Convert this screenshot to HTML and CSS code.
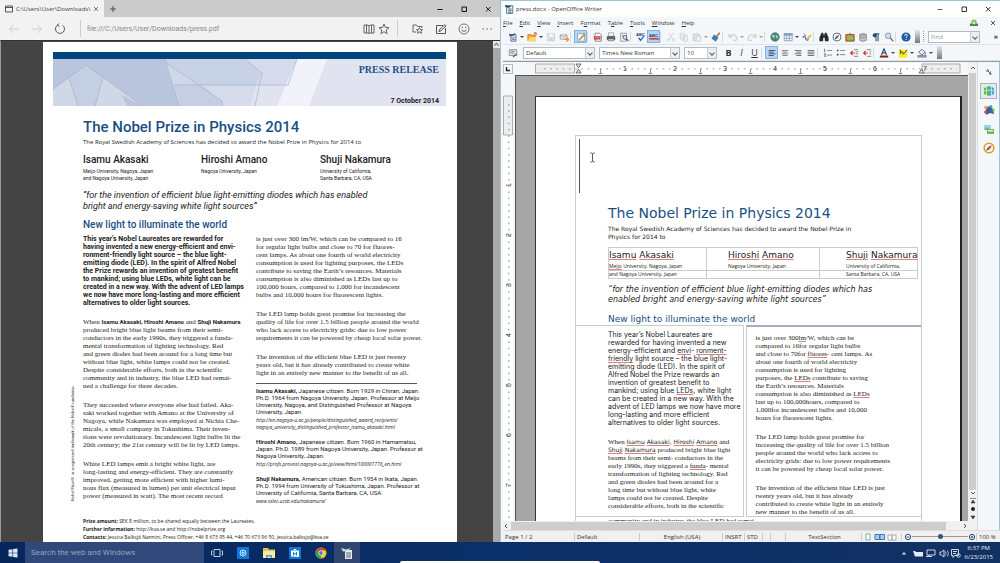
FILE: index.html
```html
<!DOCTYPE html>
<html lang="en">
<head>
<meta charset="utf-8">
<title>Desktop</title>
<link rel="stylesheet" href="styles.css">
</head>
<body>
<div class="desktop">

<section class="edge">
  <header class="tabstrip">
    <div class="tab">
      <svg class="i8" viewBox="0 0 8 8"><path d="M.5 1h7v6h-7zM.5 2.5h7" fill="none" stroke="#555"/></svg>
      <span class="tab-title">C:\Users\User\Downloads\</span>
      <button aria-label="Close tab"><svg class="i6" viewBox="0 0 6 6"><path d="M1 1l4 4M5 1l-4 4" stroke="#555" stroke-width=".8"/></svg></button>
    </div>
    <button class="newtab" aria-label="New tab"><svg class="i8" viewBox="0 0 8 8"><path d="M4 1v6M1 4h6" stroke="#444" stroke-width=".9"/></svg></button>
    <div class="winbtns">
      <button aria-label="Minimize"><svg class="i8" viewBox="0 0 8 8"><path d="M1.500 4.500h5" stroke="#111"/></svg></button>
      <button aria-label="Maximize"><svg class="i8" viewBox="0 0 8 8"><path d="M2 2h4.500v4.500H2z" fill="none" stroke="#111"/></svg></button>
      <button aria-label="Close"><svg class="i8" viewBox="0 0 8 8"><path d="M2 2l4.500 4.500M6.500 2L2 6.500" stroke="#111"/></svg></button>
    </div>
  </header>
  <div class="addressbar">
    <button aria-label="Back"><svg class="i12" viewBox="0 0 12 12"><path d="M11 6H1.500M5.500 2L1.500 6l4 4" fill="none" stroke="#ccc"/></svg></button>
    <button aria-label="Forward"><svg class="i12" viewBox="0 0 12 12"><path d="M1 6h9.500M6.500 2l4 4-4 4" fill="none" stroke="#ccc"/></svg></button>
    <button aria-label="Refresh"><svg class="i12" viewBox="0 0 12 12"><path d="M4 1.900A4.500 4.500 0 1 0 8.500 2.200M4.800.6L3.600 2.200l1.700 1.400" fill="none" stroke="#555"/></svg></button>
    <input class="url" aria-label="Address" value="file:///C:/Users/User/Downloads/press.pdf">
    <button aria-label="Reading view"><svg class="i12" viewBox="0 0 12 12"><path d="M1 2h4l1 1 1-1h4v8H7l-1 .6L5 10H1zM6 3v7M3.500 2v8M8.500 2v8" fill="none" stroke="#555" stroke-width=".9"/></svg></button>
    <button class="star" aria-label="Favorite"><svg class="i12" viewBox="0 0 12 12"><path d="M6 1l1.400 3.400 3.600.3-2.800 2.300.9 3.600L6 8.700l-3.100 1.900.9-3.600L1 4.700l3.600-.3z" fill="none" stroke="#555" stroke-width=".9"/></svg></button>
    <button aria-label="Hub"><svg class="i12" viewBox="0 0 12 12"><path d="M4 9H1V2h3.500l1 1.500H10V5" fill="none" stroke="#666"/><path d="M7.500 4.500l.9 2 2.200.2-1.700 1.400.6 2.200-2-1.200-1.900 1.200.5-2.200-1.700-1.400 2.200-.2z" fill="none" stroke="#555" stroke-width=".9"/></svg></button>
    <button aria-label="Web note"><svg class="i12" viewBox="0 0 12 12"><path d="M10.500 5v5.500h-9v-8H8M4 8.500l.6-2L10 1.600l1.200 1.200-5.300 5.100z" fill="none" stroke="#555"/></svg></button>
    <button aria-label="Feedback"><svg class="i12" viewBox="0 0 12 12"><circle cx="6" cy="6" r="5" fill="none" stroke="#666" stroke-width=".9"/><path d="M3.500 7.200q2.500 2.600 5 0" fill="none" stroke="#666"/><circle cx="4.300" cy="4.600" r=".7" fill="#555"/><circle cx="7.700" cy="4.600" r=".7" fill="#555"/></svg></button>
    <button aria-label="More"><svg class="i12" viewBox="0 0 12 12"><path d="M1.500 6h1.500M5.500 6H7M9.500 6H11" stroke="#666"/></svg></button>
  </div>
  <div class="viewer">
    <article class="pdf">
      <div class="banner">
        <svg class="banner-art" viewBox="0 0 393 47" preserveAspectRatio="none">
          <path fill="#e1e4f0" d="M0 0h393v47H0z"/>
          <path fill="#b9c4dd" d="M0 0h112l14 47H0z"/>
          <path fill="#c3cde2" d="M0 30L33 6l17 12-8 29H0z"/>
          <path fill="#d0d8e8" d="M0 30l16-11 9 28H0zM50 18l-8 29h32l-5-11 21 11zM112 3l57 39v5h-43z"/>
          <path fill="#c5cfe3" d="M16 19L33 6l17 12-8 29H25z"/>
          <path fill="#c8d2e6" d="M112 0h80l17 14-6 12h-82l48 16-57-39z"/>
          <path fill="#d6dbeb" d="M192 0h52l-10 26h-31l6-12zM121 26h82l-6 21h-28v-5z"/>
          <path fill="#c5cfe3" d="M121 26h27l21 16v5h-43z"/>
          <path fill="#f1f2fa" d="M244 0h30l-18 47h-32z"/>
          <path fill="none" stroke="#a3b1d0" stroke-width=".7" d="M0 30L33 6l57 41M16 19l9 28M50 18l-8 29M112 0l14 47M112 3l57 39v5M121 26h114L244 0M192 0l17 14-7 33"/>
        </svg>
        <div class="banner-text"><strong>PRESS RELEASE</strong><time>7 October 2014</time></div>
      </div>
      <div class="pdf-inner">
        <h1>The Nobel Prize in Physics 2014</h1>
        <p class="sub">The Royal Swedish Academy of Sciences has decided to award the Nobel Prize in Physics for 2014 to</p>
        <div class="laureates">
          <div><h3>Isamu Akasaki</h3><p>Meijo University, Nagoya, Japan<br>and Nagoya University, Japan</p></div>
          <div><h3>Hiroshi Amano</h3><p>Nagoya University, Japan</p></div>
          <div><h3>Shuji Nakamura</h3><p>University of California,<br>Santa Barbara, CA, USA</p></div>
        </div>
        <p class="quote">“for the invention of efficient blue light-emitting diodes which has enabled<br>bright and energy-saving white light sources”</p>
        <h2>New light to illuminate the world</h2>
      </div>
      <div class="pdf-cols">
        <p class="trademark">Nobel Prize® is a registered trademark of the Nobel Foundation.</p>
        <div class="serif">
          <p class="lead">This year’s Nobel Laureates are rewarded for<br>having invented a new energy-efficient and envi-<br>ronment-friendly light source – the blue light-<br>emitting diode (LED). In the spirit of Alfred Nobel<br>the Prize rewards an invention of greatest benefit<br>to mankind; using blue LEDs, white light can be<br>created in a new way. With the advent of LED lamps<br>we now have more long-lasting and more efficient<br>alternatives to older light sources.</p>
          <p>When <b>Isamu Akasaki, Hiroshi Amano</b> and <b>Shuji Nakamura</b><br>produced bright blue light beams from their semi-<br>conductors in the early 1990s, they triggered a funda-<br>mental transformation of lighting technology. Red<br>and green diodes had been around for a long time but<br>without blue light, white lamps could not be created.<br>Despite considerable efforts, both in the scientific<br>community and in industry, the blue LED had remai-<br>ned a challenge for three decades.</p>
          <p>They succeeded where everyone else had failed. Aka-<br>saki worked together with Amano at the University of<br>Nagoya, while Nakamura was employed at Nichia Che-<br>micals, a small company in Tokushima. Their inven-<br>tions were revolutionary. Incandescent light bulbs lit the<br>20th century; the 21st century will be lit by LED lamps.</p>
          <p>White LED lamps emit a bright white light, are<br>long-lasting and energy-efficient. They are constantly<br>improved, getting more efficient with higher lumi-<br>nous flux (measured in lumen) per unit electrical input<br>power (measured in watt). The most recent record</p>
        </div>
        <div class="serif">
          <p>is just over 300 lm/W, which can be compared to 16<br>for regular light bulbs and close to 70 for fluores-<br>cent lamps. As about one fourth of world electricity<br>consumption is used for lighting purposes, the LEDs<br>contribute to saving the Earth’s resources. Materials<br>consumption is also diminished as LEDs last up to<br>100,000 hours, compared to 1,000 for incandescent<br>bulbs and 10,000 hours for fluorescent lights.</p>
          <p>The LED lamp holds great promise for increasing the<br>quality of life for over 1.5 billion people around the world<br>who lack access to electricity grids: due to low power<br>requirements it can be powered by cheap local solar power.</p>
          <p>The invention of the efficient blue LED is just twenty<br>years old, but it has already contributed to create white<br>light in an entirely new manner to the benefit of us all.</p>
          <div class="bios">
            <p><b>Isamu Akasaki,</b> Japanese citizen. Born 1929 in Chiran, Japan.<br>Ph.D. 1964 from Nagoya University, Japan. Professor at Meijo<br>University, Nagoya, and Distinguished Professor at Nagoya<br>University, Japan.</p>
            <p class="link">http://en.nagoya-u.ac.jp/people/distinguished_award_recipients/<br>nagoya_university_distinguished_professor_isamu_akasaki.html</p>
            <p><b>Hiroshi Amano,</b> Japanese citizen. Born 1960 in Hamamatsu,<br>Japan. Ph.D. 1989 from Nagoya University, Japan. Professor at<br>Nagoya University, Japan.</p>
            <p class="link">http://profs.provost.nagoya-u.ac.jp/view/html/100001778_en.html</p>
            <p><b>Shuji Nakamura,</b> American citizen. Born 1954 in Ikata, Japan.<br>Ph.D. 1994 from University of Tokushima, Japan. Professor at<br>University of California, Santa Barbara, CA, USA.</p>
            <p class="link">www.sslec.ucsb.edu/nakamura/</p>
          </div>
        </div>
      </div>
      <p class="contacts"><b>Prize amount:</b> SEK 8 million, to be shared equally between the Laureates.<br><b>Further information:</b> http://kva.se and http://nobelprize.org<br><b>Contacts:</b> Jessica Balksjö Nannini, Press Officer, +46 8 673 95 44, +46 70 673 96 50, jessica.balksjo@kva.se</p>
    </article>
    <div class="vscroll"><svg class="i6" viewBox="0 0 6 6"><path d="M1 4l2-2 2 2" fill="none" stroke="#777"/></svg></div>
  </div>
</section>

<section class="writer">
  <header class="wtitle">
    <svg class="i10" viewBox="0 0 12 12"><path fill="#e6eef5" stroke="#3b6f96" d="M3 2h7.500v9.500H3z"/><path d="M1 1l4 1.500L9 2 6 4.500 2 4z" fill="#245"/><path d="M5 6h4M5 8h4M5 10h4" stroke="#357"/></svg>
    <h1>press.docx - OpenOffice Writer</h1>
    <div class="winbtns">
      <button aria-label="Minimize"><svg class="i8" viewBox="0 0 8 8"><path d="M1.500 4.500h5" stroke="#666"/></svg></button>
      <button aria-label="Maximize"><svg class="i8" viewBox="0 0 8 8"><path d="M2 2h4.500v4.500H2z" fill="none" stroke="#333"/></svg></button>
      <button aria-label="Close"><svg class="i8" viewBox="0 0 8 8"><path d="M2 2l4.500 4.500M6.500 2L2 6.500" stroke="#333"/></svg></button>
    </div>
  </header>
  <nav class="menubar">
    <button><u>F</u>ile</button><button><u>E</u>dit</button><button><u>V</u>iew</button><button><u>I</u>nsert</button><button>F<u>o</u>rmat</button><button>T<u>a</u>ble</button><button><u>T</u>ools</button><button><u>W</u>indow</button><button><u>H</u>elp</button>
    <span class="menu-right">
      <button aria-label="Update"><svg class="i8" viewBox="0 0 8 8"><path d="M0 4.500h8V7H0z" fill="#4a7a58"/><circle cx="4" cy="3" r="2.600" fill="#6cc13a"/><path d="M4 1.500V5M2.500 3.500L4 5l1.500-1.500" stroke="#fff" fill="none" stroke-width=".8"/></svg></button>
      <button aria-label="Close document"><svg class="i6" viewBox="0 0 6 6"><path d="M1 1l4 4M5 1L1 5" stroke="#555"/></svg></button>
    </span>
  </nav>
  <div class="toolbar">
    <button aria-label="New"><svg viewBox="0 0 12 12"><path fill="#dde8ef" stroke="#557" d="M3.500 3h6v8h-6z"/><path d="M1 2l4 1 4-2-2 3.500-5 .5z" fill="#2d5f83"/><path d="M5 7h3M5 9h3" stroke="#468"/></svg></button><i class="dd"></i>
    <button aria-label="Open"><svg viewBox="0 0 12 12"><path fill="#f5a81c" stroke="#c5761a" stroke-width=".8" d="M1 3h4l1 1h4v6.500H1z"/><path fill="#ffd870" d="M3 6h8.500L10 11H1z"/><path d="M7 5l4-4M8 1h3v3" stroke="#d54a22" fill="none"/></svg></button><i class="dd"></i>
    <button aria-label="Save"><svg class="off" viewBox="0 0 12 12"><path fill="#ddd" stroke="#999" d="M2 2h8v8.500H2z"/><path fill="#fff" d="M4 2h4v3H4z"/><path fill="#aaa" d="M4 7h4v3H4z"/></svg></button>
    <button aria-label="Mail"><svg viewBox="0 0 12 12"><path fill="#f2f2f2" stroke="#999" d="M1.500 3.500h8v5h-8l0-5 4 3 4-3"/><path d="M6 9h4M9 6.500L11.500 9 9 11.500" stroke="#e08a1c" fill="none" stroke-width="1.400"/></svg></button><i class="sep"></i>
    <button class="on" aria-label="Edit file"><svg viewBox="0 0 12 12"><path fill="#fff" stroke="#7a9ab8" d="M2 2h8v9H2z"/><path d="M4 8.500L9.500 2l1.500 1.200L5.500 9 3.700 9.700z" fill="#f1b52e" stroke="#8a6a20" stroke-width=".6"/></svg></button><i class="sep"></i>
    <button aria-label="Export PDF"><svg viewBox="0 0 12 12"><path fill="#fff" stroke="#777" d="M2.500 1.500H8l2 2V11H2.500z"/><path fill="#cb2b36" d="M1 5h8v4H1z"/><path d="M2 7.500l2-1.500 2 1.500 2-1.500" stroke="#fff" fill="none" stroke-width=".8"/></svg></button>
    <button aria-label="Print"><svg viewBox="0 0 12 12"><path fill="#fff" stroke="#888" stroke-width=".8" d="M3 1h6v4H3z"/><path fill="#555f6a" d="M1 5h10v4.500H1z"/><path fill="#ccc" stroke="#444" stroke-width=".6" d="M2.500 8h7v2.500h-7z"/></svg></button>
    <button aria-label="Preview"><svg viewBox="0 0 12 12"><path fill="#fff" stroke="#888" d="M2 1.500h7V11H2z"/><path d="M3.500 4h3M3.500 6h2" stroke="#89a"/><circle cx="7" cy="6.500" r="2.300" fill="#d8ecfa" stroke="#446"/><path d="M8.800 8.300l2.400 2.400" stroke="#445" stroke-width="1.400"/></svg></button><i class="sep"></i>
    <button aria-label="Spelling"><svg viewBox="0 0 12 12"><text x="0" y="5" class="abc">ABC</text><path d="M3 7l2.500 3L10 4" stroke="#2a78bd" fill="none" stroke-width="1.800"/></svg></button>
    <button class="on" aria-label="Auto spellcheck"><svg viewBox="0 0 12 12"><text x="0" y="6" class="abc">ABC</text><path d="M0 8.500l1.500-1L3 9l1.500-1.500L6 9l1.500-1.500L9 9l1.500-1.500L12 9" stroke="#d0313b" fill="none" stroke-width="1.300"/></svg></button><i class="sep"></i>
    <button aria-label="Cut"><svg class="off" viewBox="0 0 12 12"><path d="M3 1l5 7M9 1L4 8" stroke="#aaa"/><circle cx="3" cy="9.500" r="1.500" fill="none" stroke="#aaa"/><circle cx="9" cy="9.500" r="1.500" fill="none" stroke="#aaa"/></svg></button>
    <button aria-label="Copy"><svg class="off" viewBox="0 0 12 12"><path fill="#e8e8e8" stroke="#aaa" d="M1.500 1.500h5v7h-5zM5 4h5v7H5z"/></svg></button>
    <button aria-label="Paste"><svg class="off" viewBox="0 0 12 12"><path fill="#ccc" stroke="#999" d="M1.500 2.500h7v8h-7z"/><path fill="#eee" stroke="#aaa" d="M5 5h5.500v6H5z"/></svg></button><i class="dd off"></i>
    <button aria-label="Format paintbrush"><svg viewBox="0 0 12 12"><path d="M7 5l3.500-4" stroke="#a0682a" stroke-width="1.800"/><path fill="#3d7fc4" stroke="#24507e" stroke-width=".7" d="M4 3.500l4.500 3.500-3 4L1 7.500z"/></svg></button><i class="sep"></i>
    <button aria-label="Undo"><svg class="off" viewBox="0 0 12 12"><path d="M2 5q5-4 8 1t-4 4M1.500 2v4h4" fill="none" stroke="#aaa" stroke-width="1.500"/></svg></button><i class="dd off"></i>
    <button aria-label="Redo"><svg class="off" viewBox="0 0 12 12"><path d="M10 5Q5 1 2 6t4 4M10.500 2v4h-4" fill="none" stroke="#aaa" stroke-width="1.500"/></svg></button><i class="dd off"></i><i class="sep"></i>
    <button aria-label="Hyperlink"><svg viewBox="0 0 12 12"><circle cx="6" cy="6" r="5" fill="#3f8f57" stroke="#567"/><path d="M2 4l3-1 1 2-2 3zM7 3l3 2-1 3-2-1z" fill="#9fc3e8"/></svg></button>
    <button aria-label="Table"><svg viewBox="0 0 12 12"><path fill="#fff" stroke="#8a9bb0" d="M1.500 2h9.500v8.500H1.500zM1.500 7.500h9.500M4.500 2v8.500M7.800 2v8.500"/><path fill="#7d9fca" d="M1 1.500h10.500v3H1z"/></svg></button><i class="dd"></i>
    <button aria-label="Draw"><svg viewBox="0 0 12 12"><path d="M1 7q2-4 3 0t4 2" stroke="#3a72c8" fill="none" stroke-width="1.500"/><path d="M5 8l5-5 1.500 1.500-5 5z" fill="#efb52c"/><path d="M2 2l3 3" stroke="#d4533c"/></svg></button><i class="sep"></i>
    <button aria-label="Find and replace"><svg viewBox="0 0 12 12"><path fill="#222a33" d="M3 1h2l.7 3h.6L7 1h2l2.500 6v4H7V7H5v4H.5V7z"/></svg></button>
    <button aria-label="Navigator"><svg viewBox="0 0 12 12"><circle cx="6" cy="6" r="4.800" fill="#eef5fb" stroke="#5a7896" stroke-width="1.200"/><path fill="#d4432e" d="M9 3L5 5l2 2z"/><path fill="#345" d="M3 9l2-4 2 2z"/></svg></button>
    <button aria-label="Gallery"><svg viewBox="0 0 12 12"><path fill="#c98b2f" stroke="#80521c" d="M1 3h10v8H1z"/><path fill="#7ec27f" d="M3 5h6v4H3z"/><path d="M4 3l2-2 2 2" stroke="#888" fill="none"/></svg></button>
    <button aria-label="Data sources"><svg viewBox="0 0 12 12"><path fill="#bfc4c9" stroke="#777" stroke-width=".8" d="M2 3q4-2.500 8 0v7q-4 2.500-8 0z"/><path d="M2 3q4 2 8 0M2 6q4 2 8 0" fill="none" stroke="#777" stroke-width=".7"/></svg></button>
    <button aria-label="Nonprinting characters"><svg viewBox="0 0 12 12"><path d="M10 2H5M6 2v9M8.500 2v9" stroke="#2b5078" stroke-width="1.300"/><circle cx="4.500" cy="4" r="2.500" fill="#2b5078"/></svg></button>
    <button aria-label="Zoom"><svg viewBox="0 0 12 12"><circle cx="5" cy="4.500" r="3.300" fill="#cfe5f7" stroke="#6e88a2"/><path d="M7.500 7l3.500 4" stroke="#a36a3a" stroke-width="1.700"/></svg></button><i class="sep"></i>
    <button aria-label="Help"><svg viewBox="0 0 12 12"><circle cx="6" cy="6" r="5.500" fill="#2258a8"/><path d="M4.300 4.500q.2-2 2-1.800 1.600.4 1.200 1.800Q6.200 5.600 6.100 7M6.100 8.200v1.300" stroke="#fff" fill="none" stroke-width="1.200"/></svg></button>
    <i class="bar-end"></i><i class="grip"></i>
    <span class="combo find"><input aria-label="Find" placeholder="Find"><i class="chev"></i></span>
    <span class="more">»</span>
  </div>
  <div class="toolbar">
    <button aria-label="Styles"><svg viewBox="0 0 12 12"><path fill="#e4e7ea" stroke="#888" d="M1.500 2h9v7h-9z"/><path d="M3 4h5M3 6h4" stroke="#777"/><path d="M6 11l4-4" stroke="#555" stroke-width="1.500"/></svg></button>
    <span class="combo c-style"><select aria-label="Style"><option>Default</option></select><i class="chev"></i></span>
    <span class="combo c-font"><select aria-label="Font"><option>Times New Roman</option></select><i class="chev"></i></span>
    <span class="combo c-size"><select aria-label="Size"><option>10</option></select><i class="chev"></i></span>
    <button class="fmt"><b>B</b></button><button class="fmt"><em>I</em></button><button class="fmt"><u>U</u></button><i class="sep"></i>
    <button class="on" aria-label="Align left"><svg viewBox="0 0 12 12"><path d="M2 3h8M2 5h6M2 7h8M2 9h6" stroke="#557" stroke-width="1.200"/></svg></button>
    <button aria-label="Center"><svg viewBox="0 0 12 12"><path d="M2 3h8M3 5h6M2 7h8M3 9h6" stroke="#888" stroke-width="1.200"/></svg></button>
    <button aria-label="Align right"><svg viewBox="0 0 12 12"><path d="M2 3h8M4 5h6M2 7h8M4 9h6" stroke="#777" stroke-width="1.200"/></svg></button>
    <button aria-label="Justify"><svg viewBox="0 0 12 12"><path d="M2 3h8M2 5h8M2 7h8M2 9h8" stroke="#777" stroke-width="1.200"/></svg></button><i class="sep"></i>
    <button aria-label="Numbering"><svg viewBox="0 0 12 12"><path d="M2 1v4M1 7h2l-1 3h2" stroke="#444" fill="none" stroke-width=".9"/><path d="M5 3h6M5 8.500h6" stroke="#777"/></svg></button>
    <button aria-label="Bullets"><svg viewBox="0 0 12 12"><path fill="#444" d="M1 2h2v2H1zM1 7h2v2H1z"/><path d="M5 3h6M5 8h6" stroke="#777"/></svg></button>
    <button aria-label="Decrease indent"><svg viewBox="0 0 12 12"><path d="M6 2h5M8 4.500h3M8 7h3M6 10h5" stroke="#777"/><path d="M7 6H2M4.500 3.500L2 6l2.500 2.500" stroke="#c9382e" fill="none" stroke-width="1.400"/></svg></button>
    <button aria-label="Increase indent"><svg viewBox="0 0 12 12"><path d="M6 2h5M9 4.500h2M9 7h2M6 10h5" stroke="#777"/><path d="M7 6H2M4.500 3.500L2 6l2.500 2.500" stroke="#c9382e" fill="none" stroke-width="1.400"/></svg></button><i class="sep"></i>
    <button aria-label="Font color"><svg viewBox="0 0 12 12"><path d="M3 8l3-7 3 7M4 6h4" fill="none" stroke="#223c66" stroke-width="1.300"/><path fill="#8c1f24" d="M1 9h10v2.500H1z"/></svg></button><i class="dd"></i>
    <button aria-label="Highlighting"><svg viewBox="0 0 12 12"><path fill="#ffe81a" d="M1 2h10v9.500H1z"/><path d="M3 7V2M3 5h3v3M7 7l4-5" fill="none" stroke="#554" stroke-width="1.200"/></svg></button><i class="dd"></i>
    <button aria-label="Background color"><svg viewBox="0 0 12 12"><path d="M2 5l4-3.500L9.500 5 6 8.500z" fill="#e9eef3" stroke="#557"/><path d="M10 5v3" stroke="#38c" stroke-width="1.300"/><path fill="#9aa4ac" stroke="#556" stroke-width=".6" d="M1 9h10v2H1z"/></svg></button><i class="dd"></i>
    <i class="bar-end"></i>
  </div>

  <div class="work">
    <div class="edit-area">
      <div class="hruler">
        <span class="tabbox"><svg class="i6" viewBox="0 0 6 6"><path d="M1.500 1v3.500H5" fill="none" stroke="#222" stroke-width="1.300"/></svg></span>
        <svg class="hr-svg" viewBox="0 0 426 12">
          <defs><pattern id="ht" width="6.250" height="12" patternUnits="userSpaceOnUse" x="40"><path d="M.5 5h1v1.500h-1z" fill="#888"/></pattern></defs>
          <path fill="#fff" d="M40 0h346v11H40z"/>
          <path fill="#eee" stroke="#999" stroke-width=".8" d="M.5 1h39v9H.5zM387 1h38v9h-38z"/>
          <path fill="url(#ht)" d="M4 0h418v11H4z"/>
          <path d="M65.500 6v5M63.500 10.500h4M115.500 6v5M113.500 10.500h4M165.500 6v5M163.500 10.500h4M215.500 6v5M213.500 10.500h4M265.500 6v5M263.500 10.500h4M315.500 6v5M313.500 10.500h4M365.500 6v5M363.500 10.500h4" stroke="#777" stroke-width=".8"/>
          <g class="rnum"><text x="90" y="8">1</text><text x="140" y="8">2</text><text x="190" y="8">3</text><text x="240" y="8">4</text><text x="290" y="8">5</text><text x="340" y="8">6</text><text x="390" y="8">7</text></g>
          <path d="M41 1h5L43.500 5zM41 10l2.500-4L46 10zM384 10l2.500-4 2.500 4z" fill="#ddd" stroke="#555" stroke-width=".8"/>
        </svg>
      </div>
      <div class="canvas-row">
        <svg class="vruler" viewBox="0 0 12 446">
          <defs><pattern id="vt" width="12" height="6.250" patternUnits="userSpaceOnUse" y="60"><path d="M5 .5h1.500v1H5z" fill="#888"/></pattern></defs>
          <path fill="#fff" d="M0 60h10v386H0z"/>
          <path fill="#eee" stroke="#999" stroke-width=".8" d="M.5 21h9v39h-9z"/>
          <path fill="url(#vt)" d="M0 24h10v422H0z"/>
          <g class="rnum"><text transform="translate(8 110) rotate(-90)">1</text><text transform="translate(8 160) rotate(-90)">2</text><text transform="translate(8 210) rotate(-90)">3</text><text transform="translate(8 260) rotate(-90)">4</text><text transform="translate(8 310) rotate(-90)">5</text><text transform="translate(8 360) rotate(-90)">6</text><text transform="translate(8 410) rotate(-90)">7</text></g>
        </svg>
        <div class="canvas">
          <article class="doc">
            <div class="frame">
              <span class="caret"></span>
              <svg class="ibeam" viewBox="0 0 6 10"><path d="M1 1h1.500l.5.500.5-.5H5M3 1.500v7M1 9h1.500L3 8.500l.5.500H5" fill="none" stroke="#444" stroke-width=".8"/></svg>
              <div class="doc-head">
                <h1>The Nobel Prize in Physics 2014</h1>
                <p class="dsub">The Royal Swedish Academy of Sciences has decided to award the Nobel Prize in<br>Physics for 2014 to</p>
                <table>
                  <tr><td><h3><s>Isamu</s> <s>Akasaki</s></h3><p><s>Meijo</s> University, Nagoya, Japan</p></td><td><h3><s>Hiroshi</s> <s>Amano</s></h3><p>Nagoya University, Japan</p></td><td><h3><s>Shuji</s> <s>Nakamura</s></h3><p>University of California,</p></td></tr>
                  <tr><td>and Nagoya University, Japan</td><td></td><td>Santa Barbara, CA, USA</td></tr>
                </table>
                <p class="dquote">“for the invention of efficient blue light-emitting diodes which has<br>enabled bright and energy-saving white light sources”</p>
                <h2>New light to illuminate the world</h2>
              </div>
              <div class="doc-cols">
                <div class="dcol-l">
                  <p class="dlead">This year’s Nobel Laureates are<br>rewarded for having invented a new<br>energy-efficient and <s>envi</s>- <s>ronment-</s><br><s>friendly</s> light source – the blue light-<br>emitting diode (LED). In the spirit of<br>Alfred Nobel the Prize rewards an<br>invention of greatest benefit to<br>mankind; using blue <s>LEDs</s>, white light<br>can be created in a new way. With the<br>advent of LED lamps we now have more<br>long-lasting and more efficient<br>alternatives to older light sources.</p>
                  <p>When <span class="sans"><s>Isamu</s> <s>Akasaki</s>, <s>Hiroshi</s> <s>Amano</s></span> and<br><span class="sans"><s>Shuji</s> <s>Nakamura</s></span> produced bright blue light<br>beams from their semi- conductors in the<br>early 1990s, they triggered a <s>funda</s>- mental<br>transformation of lighting technology. Red<br>and green diodes had been around for a<br>long time but without blue light, white<br>lamps could not be created. Despite<br>considerable efforts, both in the scientific</p>
                </div>
                <div class="dcol-r">
                  <p>is just over 300<s>lm</s>/W, which can be<br>compared to 16for regular light bulbs<br>and close to 70for <s>fluores</s>- cent lamps. As<br>about one fourth of world electricity<br>consumption is used for lighting<br>purposes, the <s>LEDs</s> contribute to saving<br>the Earth’s resources. Materials<br>consumption is also diminished as <s>LEDs</s><br>last up to 100,000hours, compared to<br>1,000for incandescent bulbs and 10,000<br>hours for fluorescent lights.</p>
                  <p>The LED lamp holds great promise for<br>increasing the quality of life for over 1.5 billion<br>people around the world who lack access to<br>electricity grids: due to low power requirements<br>it can be powered by cheap local solar power.</p>
                  <p>The invention of the efficient blue LED is just<br>twenty years old, but it has already<br>contributed to create white light in an entirely<br>new manner to the benefit of us all.</p>
                </div>
              </div>
              <p class="doc-tail">community and in industry, the blue LED had remai-</p>
            </div>
          </article>
        </div>
      </div>
      <div class="hscroll"><svg class="i6" viewBox="0 0 6 6"><path d="M4 1L2 3l2 2" fill="none" stroke="#555"/></svg><div class="hthumb"></div><svg class="i6 hright" viewBox="0 0 6 6"><path d="M2 1l2 2-2 2" fill="none" stroke="#555"/></svg></div>
    </div>
    <div class="wscroll">
      <svg class="i6" viewBox="0 0 6 6"><path d="M1 4l2-2 2 2" fill="none" stroke="#555"/></svg><div class="wthumb"></div>
      <svg class="wnav" viewBox="0 0 8 32"><path d="M2 2l2 2 2-2" fill="none" stroke="#555"/><path d="M1 8.500h6M2 13l2-3 2 3zM2 26l2 3 2-3z" fill="#333" stroke="#444" stroke-width=".6"/><circle cx="4" cy="19" r="2" fill="#222"/></svg>
    </div>
    <aside class="sidebar">
      <button aria-label="Sidebar settings"><svg class="i8" viewBox="0 0 12 12"><path d="M3 3l5 5M3 6V3h3M8 5v5M6 9h4" stroke="#555" fill="none" stroke-width="1.300"/></svg></button>
      <button class="sel" aria-label="Properties"><svg class="i12" viewBox="0 0 12 12"><path fill="#58b947" d="M1 3l5-2v10L1 9z"/><path fill="#3fa8dc" d="M6 1l5 2v6l-5 2z"/><path d="M1 6l5-1 5 1M3.500 2v8M8.500 2v8" stroke="#d8f0c8" fill="none" stroke-width=".8"/></svg></button>
      <button aria-label="Styles"><svg class="i12" viewBox="0 0 12 12"><path fill="#3e5c96" d="M3 4l3-2 4 3 1 5-4-1-4 2z"/><circle cx="3" cy="3.500" r="1.800" fill="#e8a13a"/><circle cx="8" cy="2.500" r="1.500" fill="#3aa3d8"/><circle cx="10" cy="6" r="1.500" fill="#58b947"/><circle cx="2.500" cy="8" r="1.500" fill="#d0437c"/></svg></button>
      <button aria-label="Gallery"><svg class="i12" viewBox="0 0 12 12"><path fill="#9bd4ea" d="M1 2h7v5H1z"/><path fill="#77b657" d="M1 7l3-3 4 3zM4 6h7v5H4z"/><path fill="#d5ecf8" d="M5 7h5v1.500H5z"/></svg></button>
      <button aria-label="Navigator"><svg class="i12" viewBox="0 0 12 12"><circle cx="6" cy="6" r="4.800" fill="#fdf6e6" stroke="#e59a2c" stroke-width="1.600"/><path fill="#d6402c" d="M9 3L5 5l2 2z"/><path fill="#3b5f98" d="M3 9l2-4 2 2z"/></svg></button>
    </aside>
  </div>
  <footer class="status">
    <span class="s1">Page 1 / 2</span><span class="s2">Default</span><span class="s3">English (USA)</span><span class="s4">INSRT</span><span class="s5">STD</span><span class="s6"></span><span class="s7"></span><span class="s8">TextSection</span>
    <span class="s9"><svg viewBox="0 0 34 8"><path d="M2 1h4v6H2z" fill="#fff" stroke="#8aa"/><path d="M11 1.500h4.500v5H11zM16 1.500h4.500v5H16z" fill="#a9cdf0" stroke="#3c78b8"/><path d="M24 2h4v5h-4zM28 2h4v5h-4z" fill="#fff" stroke="#999" stroke-width=".8"/></svg></span>
    <span class="s10"><svg class="i8" viewBox="0 0 8 8"><circle cx="4" cy="4" r="2.700" fill="#fff" stroke="#357"/><path d="M2.500 4h3" stroke="#357"/></svg><input type="range" aria-label="Zoom" min="0" max="100" value="50"><svg class="i8" viewBox="0 0 8 8"><circle cx="4" cy="4" r="2.700" fill="#fff" stroke="#357"/><path d="M2.500 4h3M4 2.500v3" stroke="#357"/></svg></span>
    <span class="s11">100 %</span>
  </footer>
</section>
</div>

<footer class="taskbar">
  <button class="start" aria-label="Start"><svg class="i10" viewBox="0 0 10 10"><path fill="#dfe6f2" d="M.5 1.800l4-.6v3.500h-4zM5.100 1.100L9.500.5v4.200H5.100zM.5 5.300h4v3.500l-4-.6zM5.100 5.300h4.400v4.200l-4.400-.6z"/></svg></button>
  <input class="search" aria-label="Search" placeholder="Search the web and Windows">
  <div class="apps">
    <button aria-label="Task view"><svg class="i12" viewBox="0 0 12 12"><path d="M3 2.500h6v7H3zM1.500 4H.5v4h1M10.500 4h1v4h-1" fill="none" stroke="#d8e0ec" stroke-width=".9"/></svg></button>
    <button aria-label="Teams"><svg class="i14" viewBox="0 0 14 14"><path fill="#0f78d6" d="M1 1h12v12H1z"/><circle cx="7" cy="7" r="3" fill="none" stroke="#cfe6fb"/><path d="M7 5v4M5 7h4" stroke="#cfe6fb"/></svg></button>
    <button aria-label="File Explorer"><svg class="i14" viewBox="0 0 14 14"><path fill="#e8bf4b" d="M1 2h5l1 1.500h6V12H1z"/><path fill="#fbe8a0" d="M1 5h12v7H1z"/><path fill="#4aa3e0" d="M4 9h6v3H8.500v-1.500h-3V12H4z"/></svg></button>
    <button aria-label="Store"><svg class="i14" viewBox="0 0 14 14"><path fill="#0f78d6" d="M1 1h12v12H1z"/><path fill="#fff" d="M3 4.500h8V11l-8-.5z"/><path d="M5.500 4.500q1.500-3 3 0" fill="none" stroke="#fff"/><path d="M5.500 6v3.500M8.500 6v3.500M5 7.800h4" stroke="#0f78d6"/></svg></button>
    <button aria-label="Chrome"><svg class="i14" viewBox="0 0 14 14"><circle cx="7" cy="7" r="5.500" fill="#f3c42c"/><path fill="#d94234" d="M7 7L2.200 4.200A5.500 5.500 0 0 1 11.900 4.500H7z"/><path fill="#3a9e4a" d="M7 7L2.200 4.200A5.500 5.500 0 0 0 6.800 12.500z"/><circle cx="7" cy="7" r="2.500" fill="#fff"/><circle cx="7" cy="7" r="1.900" fill="#3f7fe0"/></svg></button>
    <button class="active" aria-label="OpenOffice"><svg class="i14" viewBox="0 0 14 14"><path fill="#e8edf2" d="M5 4h7v9H5z"/><path d="M1 2l5 1.500L11 2 7.500 5 3 5.500z" fill="#cfd9e4"/><path d="M6 7h5M6 9h5M6 11h5" stroke="#456" stroke-width=".9"/></svg></button>
  </div>
  <div class="sheet"></div>
  <div class="tray">
    <svg viewBox="0 0 66 12"><path fill="#e4eaf4" d="M3 7.500l2-2.500 2 2.500zM14 4h2l1 1h7v4.500h-8z"/><path d="M28 3h8v5h-8zM27 9.500h6M30 8v1.500M41 5h1.500L45 3v7l-2.500-2H41z" fill="none" stroke="#e4eaf4" stroke-width=".9"/><path d="M46.500 4.500q1.200 2 0 4M48.500 3.500q1.800 3 0 6" fill="none" stroke="#cbd5e6" stroke-width=".8"/><path d="M52.500 2.500h7v6h-4l-1.500 2v-2h-1.500zM54 4.500h4M54 6.500h3" fill="none" stroke="#e4eaf4" stroke-width=".9"/><circle cx="59.500" cy="8.500" r="1.800" fill="none" stroke="#e4eaf4" stroke-width=".8"/></svg>
    <time>6:37 PM<br>6/23/2015</time>
  </div>
</footer>
</body>
</html>
```
FILE: styles.css
```css
* { box-sizing: border-box; }
body { margin: 0; height: 100vh; display: flex; flex-direction: column; overflow: hidden; font: 6px/10px "Open Sans", sans-serif; color: #333; }
h1, h2, h3, p { margin: 0; font-weight: 400; font-size: inherit; }
button, input, select { font: inherit; color: inherit; border: 0; background: none; padding: 0; margin: 0; outline: 0; }
button { display: flex; align-items: center; justify-content: center; flex: none; }
svg { display: block; flex: none; }
time { display: block; }
.i6 { width: 6px; height: 6px; }
.i8 { width: 8px; height: 8px; }
.i10 { width: 10px; height: 10px; }
.i12 { width: 12px; height: 12px; }
.i14 { width: 14px; height: 14px; }

.desktop { flex: 1; min-height: 0; display: grid; grid-template-columns: 1fr 1fr; }

/* Browser window */
.edge { display: flex; flex-direction: column; min-width: 0; min-height: 0; background: #f2f2f2; }
.tabstrip { display: flex; height: 17px; background: #cbcbcb; align-items: stretch; }
.tab { width: 104px; background: #f2f2f2; display: flex; align-items: center; gap: 3px; padding: 0 6px 0 5px; color: #444; }
.tab-title { flex: 1; white-space: nowrap; }
.newtab { width: 18px; }
.winbtns { margin-left: auto; display: flex; align-items: center; gap: 16px; padding-right: 8px; }
.addressbar { display: flex; align-items: center; height: 23px; padding: 0 7px 0 8px; gap: 11px; }
.url { flex: 1; min-width: 0; height: 17px; margin-left: 3px; border-left: 1px solid #ccc; padding-left: 6px; color: #888; font: 7px Roboto, sans-serif; }
.addressbar .star { margin: 0 3px 0 -8px; width: 20px; height: 17px; border-right: 1px solid #ccc; justify-content: flex-start; }
.viewer { flex: 1; min-height: 0; display: flex; background: #444; border-top: 1px solid #333; border-left: 1px solid #999; }
.pdf { flex: 1; margin: 1px 36px 0 42px; padding: 10px 11px 0 10px; background: #fff; overflow: hidden; white-space: nowrap; font-family: Roboto, sans-serif; color: #222; }
.vscroll { width: 7px; background: #a8a8a8; }
.vscroll svg { background: #e8e8e8; width: 7px; height: 7px; }
.banner { border-top: 7px solid #02457c; display: grid; height: 54px; }
.banner-art { grid-area: 1 / 1; width: 100%; height: 47px; }
.banner-text { grid-area: 1 / 1; display: flex; flex-direction: column; justify-content: space-between; align-items: flex-end; padding: 5px 7px 0 0; }
.banner-text strong { font: 700 10px/12px "Liberation Serif", serif; color: #1c5088; }
.banner-text time { font-weight: 700; font-size: 7px; line-height: 10px; }
.pdf-inner { padding: 12px 30px 4px; }
.pdf h1 { font-size: 15px; line-height: 18px; font-weight: 500; color: #1a4f83; }
.sub { margin-top: 1px; font: 6px/10px "Open Sans", sans-serif; }
.laureates { display: grid; grid-template-columns: 118fr 119fr 96fr; margin-top: 7px; }
.laureates h3 { font-size: 10px; line-height: 12px; font-weight: 500; }
.laureates p { margin-top: 2px; font-size: 5px; line-height: 7px; }
.quote { margin-top: 8px; font-size: 9px; line-height: 11px; font-style: italic; }
.pdf h2 { margin-top: 7px; font-size: 10px; line-height: 12px; font-weight: 500; color: #1a4f83; }
.pdf-cols { display: grid; grid-template-columns: 23px 166px 161px; column-gap: 7px; height: 270px; }
.trademark { writing-mode: vertical-rl; transform: rotate(180deg); justify-self: end; font-size: 4px; line-height: 6px; height: 266px; }
.serif { font: 7px/8px "Liberation Serif", serif; }
.serif > p + p { margin-top: 11px; }
.lead { font-family: Roboto, sans-serif; font-weight: 700; }
.serif b { font-family: Roboto, sans-serif; font-size: 6px; }
.bios { margin-top: 6px; padding-top: 3px; border-top: 1px solid #555; font: 6px/7px Roboto, sans-serif; }
.bios .link { font: italic 5px/7px "Open Sans", sans-serif; margin: 2px 0 7px; }
.contacts { margin-top: 12px; padding-left: 30px; font: 5px/8px "Open Sans", sans-serif; }

/* Writer window */
.writer { display: flex; flex-direction: column; min-width: 0; min-height: 0; background: #f4f7fa; border-top: 1px solid #9fc4d4; border-left: 1px solid #a8bccb; padding-left: 2px; }
.wtitle { height: 16px; display: flex; align-items: center; gap: 2px; padding-left: 1px; background: #fff; }
.menubar { display: flex; align-items: center; height: 12px; gap: 7px; }
.menu-right { margin-left: auto; display: flex; gap: 12px; padding-right: 4px; align-items: center; }
.toolbar { display: flex; align-items: center; height: 16px; padding-left: 3px; border-bottom: 1px solid #dde3e8; }
.toolbar button { width: 13px; height: 13px; }
.toolbar button svg { width: 10px; height: 10px; }
.toolbar .on { background: #b5d5f2; border: 1px solid #7fb2e2; }
.off { opacity: .5; }
.abc { font: 700 5px "Liberation Sans", sans-serif; fill: #345; }
.dd { width: 6px; display: flex; justify-content: center; }
.dd::after { content: ""; border: 2px solid transparent; border-top-color: #444; border-bottom: 0; }
.sep { width: 4px; height: 10px; border-left: 1px solid #d5dade; }
.bar-end { width: 5px; height: 13px; margin-left: 3px; background: linear-gradient(#e4e7ea, #777); }
.grip { width: 2px; height: 11px; margin: 0 3px; border-left: 1px dotted #999; }
.combo { display: flex; align-items: center; height: 12px; border: 1px solid #b4bac0; background: #fff; }
.combo select, .combo input { appearance: none; flex: 1; min-width: 0; padding-left: 2px; height: 10px; }
.chev { width: 9px; height: 10px; background: #eceff1; border-left: 1px solid #ccc; display: flex; align-items: center; justify-content: center; }
.chev::after { content: ""; width: 3px; height: 3px; border: solid #555; border-width: 0 1px 1px 0; transform: rotate(45deg); }
.find { width: 52px; }
.more { margin-left: auto; padding-right: 2px; font-size: 7px; font-weight: 700; }
.c-style { width: 72px; margin: 0 4px; }
.c-font { width: 81px; margin-right: 4px; }
.c-size { width: 33px; margin-right: 5px; }
.toolbar .fmt { font-size: 9px; }
.work { flex: 1; min-height: 0; display: flex; border-top: 1px solid #999; }
.edit-area { flex: 1; min-width: 0; display: flex; flex-direction: column; }
.hruler { height: 13px; display: flex; align-items: center; }
.tabbox { width: 10px; height: 10px; border: 1px solid #bbb; display: flex; align-items: center; justify-content: center; margin-right: 22px; }
.hr-svg { width: 426px; height: 12px; }
.rnum { font: 7px "Liberation Sans", sans-serif; fill: #333; text-anchor: middle; }
.canvas-row { flex: 1; min-height: 0; display: flex; overflow: hidden; }
.vruler { width: 12px; height: 446px; }
.canvas { flex: 1; min-width: 0; background: #a6a6a6; border-top: 1px solid #555; border-left: 1px solid #555; padding: 20px 6px 0 19px; }
.doc { background: #fff; border: 1px solid #333; border-right: 2px solid #222; padding: 38px 38px 0 39px; min-height: 100%; }
.frame { position: relative; border: 1px solid #ccc; border-bottom: 0; padding-top: 68px; white-space: nowrap; font-family: "DejaVu Sans", sans-serif; color: #222; }
.caret { position: absolute; left: 3px; top: 3px; width: 1px; height: 54px; background: #555; }
.ibeam { position: absolute; left: 13px; top: 16px; width: 7px; height: 11px; }
.doc-head { padding: 0 3px 0 32px; }
.doc h1 { font-size: 14px; line-height: 18px; color: #1a4f83; }
.dsub { margin-top: 3px; font-size: 6px; line-height: 8px; }
.doc table { width: 100%; border-collapse: collapse; table-layout: fixed; margin-top: 6px; font: 5px/7px "Open Sans", sans-serif; }
.doc td { border: 1px solid #ccc; padding: 0; height: 8px; }
.doc td:nth-child(2) { width: 113px; padding-left: 21px; }
.doc td:nth-child(3) { padding-left: 26px; }
.doc h3 { font: 9px/15px "DejaVu Sans", sans-serif; }
.doc s { text-decoration: underline 1px #e08080; text-underline-offset: 1px; }
.dquote { margin-top: 6px; font-size: 8px; line-height: 10px; font-style: italic; }
.doc h2 { margin-top: 8px; font-size: 9px; line-height: 12px; color: #1a4f83; }
.doc-cols { display: grid; grid-template-columns: 168fr 176fr; column-gap: 2px; font: 7px/8px "Liberation Serif", serif; }
.doc-cols p + p { margin-top: 11px; }
.dcol-l { border: 1px solid #ccc; border-left: 0; padding: 5px 0 0 32px; }
.dcol-r { border: 1px solid #ccc; border-right: 0; border-top: 2px solid #a9a9c0; padding: 7px 0 0 9px; }
.dlead { font-family: Inter, sans-serif; }
.sans { font-family: "DejaVu Sans", sans-serif; font-size: 6px; }
.doc-tail { padding-left: 32px; font: 7px/8px "Liberation Serif", serif; }
.hscroll { height: 9px; display: flex; align-items: center; background: #f0f0f0; gap: 2px; }
.hthumb { flex: 1; height: 8px; background: #cdcdcd; }
.hright { margin-left: 14px; }
.wscroll { width: 9px; display: flex; flex-direction: column; align-items: center; padding-top: 3px; background: #f0f0f0; }
.wthumb { flex: 1; width: 7px; margin-top: 2px; background: #cdcdcd; }
.wnav { width: 8px; height: 32px; margin-bottom: 8px; }
.sidebar { width: 23px; border-left: 1px solid #ddd; border-right: 1px solid #9fc4d4; padding-top: 2px; display: flex; flex-direction: column; align-items: center; gap: 3px; }
.sidebar button { width: 17px; height: 16px; }
.sidebar .sel { border: 1px solid #aab4bc; background: #e4e9ee; }
.status { height: 12px; display: grid; grid-template-columns: 71px 65px 83px 22px 18px 8px 15px 76px 40px 75px 1fr; align-items: center; border-top: 1px solid #ddd; background: #f0f0f0; white-space: nowrap; }
.status span { border-left: 1px solid #ccc; height: 8px; line-height: 8px; padding-left: 2px; }
.status .s1 { border: 0; }
.status .s3, .status .s8 { text-align: center; }
.s9 svg { width: 34px; height: 8px; }
.status .s10 { display: flex; align-items: center; }
.s10 input { appearance: none; flex: 1; min-width: 0; height: 8px; background: linear-gradient(#999, #999) center / 100% 1px no-repeat; }
.s10 input::-webkit-slider-thumb { appearance: none; width: 5px; height: 5px; border-radius: 50%; background: #357; }

/* Taskbar */
.taskbar { height: 21px; flex: none; display: flex; align-items: stretch; position: relative; background: linear-gradient(90deg, #06265c, #0b2f68 50%, #123163); color: #e8edf5; }
.start { width: 25px; }
.search { width: 179px; background: #31497a; padding-left: 6px; font: 8px Roboto, sans-serif; }
.search::placeholder { color: #92a2c0; }
.find input::placeholder { color: #999; }
.apps { display: flex; }
.apps button { width: 26px; height: 21px; }
.apps .active { background: #30466f; }
.sheet { position: absolute; left: 40%; right: 40%; bottom: 0; height: 2px; background: #fff; border-radius: 2px 2px 0 0; }
.tray { margin-left: auto; display: flex; align-items: center; gap: 0; padding-right: 7px; }
.tray svg { width: 66px; height: 12px; }
.tray time { font-size: 6px; line-height: 9px; text-align: center; }
```
